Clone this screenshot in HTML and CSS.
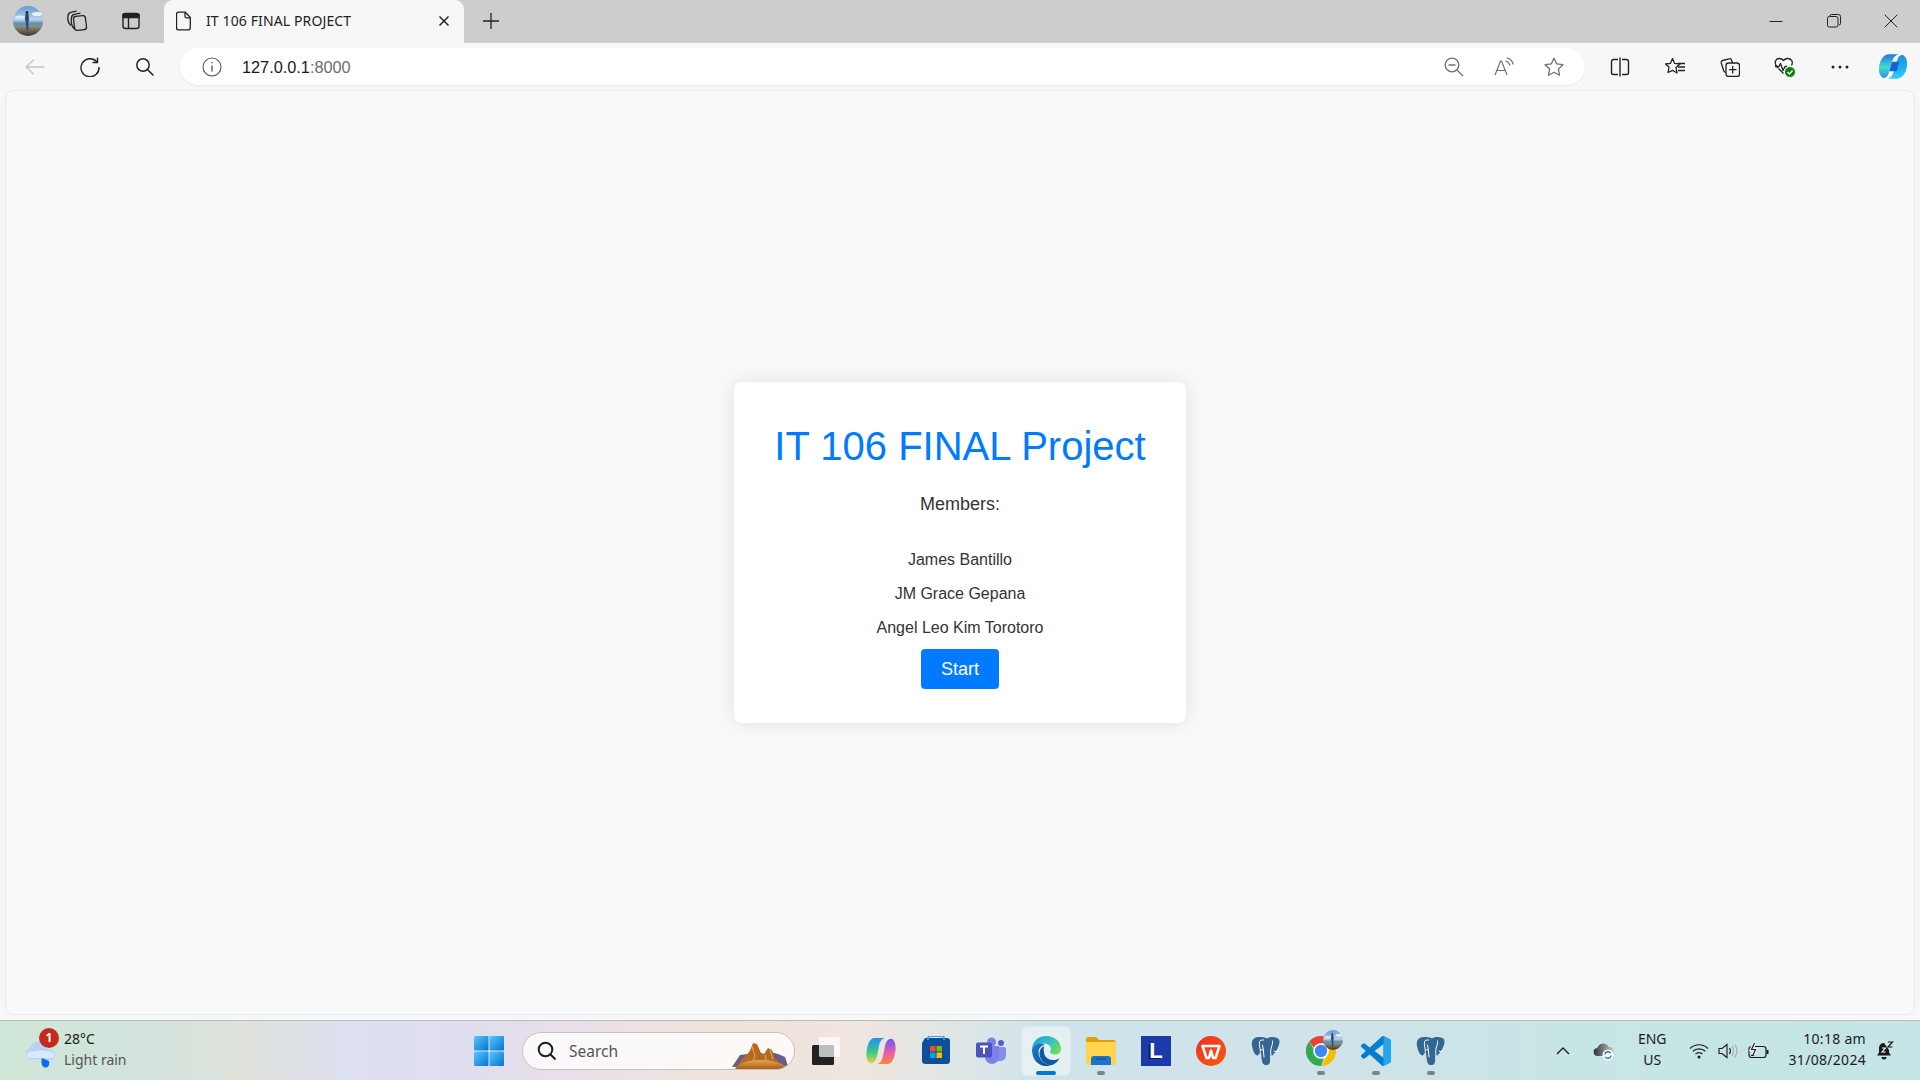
FILE: index.html
```html
<!DOCTYPE html>
<html lang="en">
<head>
<meta charset="utf-8">
<title>IT 106 FINAL PROJECT</title>
<link rel="stylesheet" href="styles.css">
</head>
<body>
<svg class="defs" width="0" height="0" aria-hidden="true">
  <defs>
    <linearGradient id="sky" x1="0" y1="0" x2="0" y2="1"><stop offset="0" stop-color="#5f9ad8"/><stop offset=".45" stop-color="#b9d4ea"/><stop offset=".58" stop-color="#5a93b8"/><stop offset=".68" stop-color="#8f8a78"/><stop offset="1" stop-color="#3f352e"/></linearGradient>
    <linearGradient id="win" x1="0" y1="0" x2="1" y2="1"><stop offset="0" stop-color="#55c9fb"/><stop offset="1" stop-color="#0672d0"/></linearGradient>
    <linearGradient id="cop1" x1="0" y1="0" x2="0" y2="1"><stop offset="0" stop-color="#1f8fe8"/><stop offset=".6" stop-color="#1fb0ee"/><stop offset="1" stop-color="#35d0f2"/></linearGradient>
    <linearGradient id="cop2" x1="0" y1="1" x2="0" y2="0"><stop offset="0" stop-color="#2f8fe8"/><stop offset=".45" stop-color="#46dcc8"/><stop offset="1" stop-color="#1c7ae0"/></linearGradient>
    <linearGradient id="copa" x1="0" y1="0" x2="0" y2="1"><stop offset="0" stop-color="#2a8df0"/><stop offset=".55" stop-color="#36c98a"/><stop offset="1" stop-color="#e8d23a"/></linearGradient>
    <linearGradient id="copb" x1="0" y1="0" x2="0" y2="1"><stop offset="0" stop-color="#6a5cf0"/><stop offset=".55" stop-color="#e85ca8"/><stop offset="1" stop-color="#f58a3c"/></linearGradient>
    <linearGradient id="edgeg" x1="0" y1="0" x2="1" y2=".6"><stop offset="0" stop-color="#1a9bd8"/><stop offset=".6" stop-color="#35c1c8"/><stop offset="1" stop-color="#6cdc5a"/></linearGradient>
    <linearGradient id="edgeb" x1="0" y1="0" x2="1" y2="1"><stop offset="0" stop-color="#1c7fd0"/><stop offset="1" stop-color="#0c4a8e"/></linearGradient>
    <linearGradient id="wps" x1="0" y1="0" x2="1" y2="1"><stop offset="0" stop-color="#ee3124"/><stop offset="1" stop-color="#fb5a08"/></linearGradient>
    <linearGradient id="sand" x1="0" y1="0" x2="0" y2="1"><stop offset="0" stop-color="#e9a650"/><stop offset="1" stop-color="#a85c18"/></linearGradient>
    <symbol id="avatar" viewBox="0 0 30 30">
      <circle cx="15" cy="15" r="15" fill="url(#sky)"/>
      <ellipse cx="24" cy="8" rx="5" ry="2" fill="#e6eff7"/>
      <ellipse cx="7" cy="11" rx="5" ry="1.500" fill="#dfeaf4"/>
      <path d="M12.500 8h3l.5 5-.8 4 .3 7h-2l-.5-7-1-4z" fill="#2b4470"/>
      <circle cx="14" cy="6.500" r="1.500" fill="#2a2a30"/>
    </symbol>
    <symbol id="pg" viewBox="0 0 30 30">
      <path d="M8 1C3 1 0 4 1 10c.8 4 2.500 9 5 9.500 2 .3 2.500-2.500 3.500-4.500 1 3 .8 7 1.500 10 .6 3.500 3 4.500 5.500 4 2.200-.5 2.600-2.500 2.600-5v-4.500c1.800.5 3 0 3.400-1.500 2.500-1.500 6-8.500 6-12.500C28.500 2 24.500 1 21 1c-2 0-3.500.5-5 1.500C14 1.300 11 1 8 1z" fill="#336791"/>
      <path d="M9.500 15c-.5-3-1.500-6-1-9 .3-1.500 2-2.500 4-2M20 20c-.5-4-.5-6 .5-9 .5-2 1.500-3.500 1-6M11.500 9c1 4 1 8 1.500 12M23 15c1.500 1 2.500 1 4-.5M9 15c1-1.500 3-2 3.500-.5" fill="none" stroke="#fff" stroke-width="1" stroke-linecap="round"/>
    </symbol>
  </defs>
</svg>

<div class="screen">
  <header class="tabstrip">
    <div class="strip-btn strip-avatar"><svg class="i30" viewBox="0 0 30 30"><use href="#avatar"/></svg></div>
    <div class="strip-btn strip-work">
      <svg class="i22" viewBox="0 0 22 22" fill="none" stroke="#222" stroke-width="1.300" stroke-linejoin="round"><rect x="8" y="6" width="12" height="14" rx="2.500" transform="rotate(-7 14 13)"/><path d="M8 18.500C5.500 16 5 11 5.500 7.500 5.800 5.500 7 4.500 9 4.200l5.500-1"/><path d="M5 15.500C2 13 1.500 8.500 2 5.500 2.300 3.500 3.500 2.500 5.500 2.200L10.500 1.200"/></svg>
    </div>
    <div class="strip-btn strip-vert">
      <svg class="i20" viewBox="0 0 20 20" fill="none" stroke="#222" stroke-width="1.400"><rect x="2" y="2.500" width="16" height="15" rx="2.500"/><path d="M2 3.500h16v3H2z" fill="#222"/><path d="M7.500 6v11.500"/></svg>
    </div>
    <div class="tab">
      <svg class="i-file" viewBox="0 0 16 20" fill="none" stroke="#222" stroke-width="1.300" stroke-linejoin="round"><path d="M2.500 1.200h6.800l5 5.300v10.300a2 2 0 0 1-2 2h-9.800a2 2 0 0 1-2-2V3.200a2 2 0 0 1 2-2z"/><path d="M9 1.500v3.800a1.500 1.500 0 0 0 1.500 1.500H14"/></svg>
      <span class="tab-title">IT 106 FINAL PROJECT</span>
      <svg class="i-x" viewBox="0 0 12 12" fill="none" stroke="#222" stroke-width="1.500"><path d="M1.500 1.500l9 9M10.500 1.500l-9 9"/></svg>
    </div>
    <div class="strip-btn strip-new">
      <svg class="i18" viewBox="0 0 18 18" fill="none" stroke="#222" stroke-width="1.300"><path d="M9 1v16M1 9h16"/></svg>
    </div>
    <div class="spacer"></div>
    <div class="win-btn"><svg class="i14" viewBox="0 0 14 14" fill="none" stroke="#222" stroke-width="1"><path d="M.5 7.500h13"/></svg></div>
    <div class="win-btn"><svg class="i14" viewBox="0 0 14 14" fill="none" stroke="#222" stroke-width="1"><rect x=".5" y="2.500" width="10.500" height="10.500" rx="1.800"/><path d="M3 2.500V2A1.500 1.500 0 0 1 4.500.5h7A2 2 0 0 1 13.500 2.500v7A1.500 1.500 0 0 1 12 11"/></svg></div>
    <div class="win-btn"><svg class="i14" viewBox="0 0 14 14" fill="none" stroke="#222" stroke-width="1"><path d="M.7.700l12.600 12.600M13.300.700.700 13.300"/></svg></div>
  </header>

  <nav class="toolbar">
    <div class="tool-btn"><svg class="i20" viewBox="0 0 20 20" fill="none" stroke="#c4c4c4" stroke-width="1.300"><path d="M19.500 10H1M9 2.500 1 10l8 7.500"/></svg></div>
    <div class="tool-btn"><svg class="i20" viewBox="0 0 20 20" fill="none" stroke="#222" stroke-width="1.400"><path d="M16.800 4.800A9 9 0 1 0 19 10"/><path d="M17.500.500v5h-5"/></svg></div>
    <div class="tool-btn"><svg class="i20" viewBox="0 0 20 20" fill="none" stroke="#222" stroke-width="1.500"><circle cx="8" cy="8" r="6.200"/><path d="M12.500 12.500l6 6"/></svg></div>
    <div class="address">
      <svg class="i-info" viewBox="0 0 20 20" fill="none" stroke="#555" stroke-width="1.100"><circle cx="10" cy="10" r="9"/><path d="M10 8.500v6" stroke-width="1.300"/><circle cx="10" cy="5.800" r=".8" fill="#555" stroke="none"/></svg>
      <span class="url"><span class="url-host">127.0.0.1</span><span class="url-port">:8000</span></span>
      <div class="spacer"></div>
      <div class="addr-btn"><svg class="i20" viewBox="0 0 20 20" fill="none" stroke="#707070" stroke-width="1.300"><circle cx="8" cy="8" r="6.800"/><path d="M4.500 8h7M13 13l6 6"/></svg></div>
      <div class="addr-btn"><svg class="i20" viewBox="0 0 20 20" fill="none" stroke="#707070" stroke-width="1.200"><path d="M1 18 6.500 4h1L13 18M3 13.500h8.500"/><path d="M11.500 4c2.200.5 3.800 2.200 4.500 4.500M13 .800c3 .7 5.400 3 6.200 6.700"/></svg></div>
      <div class="addr-btn"><svg class="i20" viewBox="0 0 20 20" fill="none" stroke="#707070" stroke-width="1.300" stroke-linejoin="round"><path d="M10 1.200l2.700 5.700 6.200.8-4.500 4.300 1.100 6.200-5.500-3-5.500 3 1.100-6.200L1.100 7.700l6.200-.8z"/></svg></div>
    </div>
    <div class="tool-btn tool-first"><svg class="i20" viewBox="0 0 20 20" fill="none" stroke="#222" stroke-width="1.400"><path d="M8 2.500H3.500a2 2 0 0 0-2 2v11a2 2 0 0 0 2 2H8M12 2.500h4.500a2 2 0 0 1 2 2v11a2 2 0 0 1-2 2H12M10 .500v19"/></svg></div>
    <div class="tool-btn"><svg class="i20" viewBox="0 0 20 20" fill="none" stroke="#222" stroke-width="1.300" stroke-linejoin="round"><path d="M7.500 1.500l2 4.800 5.500.7-4 3.500 1 5.500-4.500-2.700L3 15.500l1-5.500L.5 7l5-.7z"/><path d="M13 6.500h7M13 10h7M13 13.500h7"/></svg></div>
    <div class="tool-btn"><svg class="i20" viewBox="0 0 20 20" fill="none" stroke="#222" stroke-width="1.300" stroke-linejoin="round"><rect x="6" y="6" width="13.500" height="13.500" rx="2.500"/><path d="M12.700 9v7.500M9 12.700h7.500"/><path d="M12.500 6 11.500 3a1.800 1.800 0 0 0-2.200-1.200L2.500 3.500A1.800 1.800 0 0 0 1.200 5.700l2.500 8c.3.700.9 1.300 2.300 1.800"/></svg></div>
    <div class="tool-btn"><svg class="i22" viewBox="0 0 22 22" fill="none" stroke="#222" stroke-width="1.300" stroke-linejoin="round"><path d="M4 12C1.500 9.500.5 7.500 1.500 5c1.200-3 5.500-3.500 8-.5 2.500-3 7-2.500 8.500.5 .5 1.500.3 3-.5 4.500"/><path d="M1 10.500h4l1.500-3 2.500 7 2-4h2M4.500 12.500l5 5"/><circle cx="16" cy="16" r="5.500" fill="#107c10" stroke="#f7f7f7" stroke-width="1"/><path d="M13.500 16l2 2 3-3.500" stroke="#fff" stroke-width="1.300"/></svg></div>
    <div class="tool-btn"><svg class="i20" viewBox="0 0 20 20" fill="#222"><circle cx="3" cy="10" r="1.500"/><circle cx="10" cy="10" r="1.500"/><circle cx="17" cy="10" r="1.500"/></svg></div>
    <div class="tool-btn tool-last"><svg class="i-cop" viewBox="0 0 32 28"><path d="M11 1h11c-4 1-6 4-7 8l-3 10c-1 5-4 8-7 7C2 24 .5 20 1 15 2 8 5 2 11 1z" fill="url(#cop2)"/><path d="M21 27H10c4-1 6-4 7-8l3-10c1-5 4-8 7-7 3 2 4.500 6 4 11-1 7-4 13-10 14z" fill="url(#cop1)"/><path d="M15 9h7.500L20 19h-8z" fill="#1a5fd6"/></svg></div>
  </nav>

  <div class="frame">
    <main class="page">
      <section class="card">
        <h1 class="card-title">IT 106 FINAL Project</h1>
        <p class="card-label">Members:</p>
        <p class="member member-first">James Bantillo</p>
        <p class="member">JM Grace Gepana</p>
        <p class="member">Angel Leo Kim Torotoro</p>
        <button class="start" type="button">Start</button>
      </section>
    </main>
  </div>

  <footer class="taskbar">
    <div class="task-left">
      <div class="weather-icon">
        <svg class="i-cloud" viewBox="0 0 32 30"><path d="M7 20a5.500 5.500 0 0 1-1-10.800C7.500 4 13 1.500 18 4c3 1.500 4.500 4 5 6 4-.5 8 2 8 6s-3 5-6 5z" fill="#b6d2f5"/><path d="M5 19c-3-1-3-5 0-6 8-2 18-2 23 0 3 1 3 5 0 6z" fill="#d9e8fb"/><path d="M18 19l7 3c1 4-1 7-4 6.500S16.500 24 18 19z" fill="#0a6fe8"/></svg>
        <span class="badge">1</span>
      </div>
      <div class="text-stack">
        <span class="t-main">28°C</span>
        <span class="t-sub">Light rain</span>
      </div>
    </div>

    <div class="task-center">
      <div class="task-item task-start"><svg class="i30" viewBox="0 0 30 30"><g fill="url(#win)"><rect width="14.500" height="14.500" rx="1"/><rect x="15.500" width="14.500" height="14.500" rx="1"/><rect y="15.500" width="14.500" height="14.500" rx="1"/><rect x="15.500" y="15.500" width="14.500" height="14.500" rx="1"/></g></svg></div>
      <div class="search">
        <svg class="i-search" viewBox="0 0 20 20" fill="none" stroke="#1f1f1f" stroke-width="2"><circle cx="8.500" cy="8.500" r="6.800"/><path d="M13.500 13.500l5 5"/></svg>
        <span class="search-text">Search</span>
        <svg class="mount" viewBox="0 0 56 27"><path d="M0 25 8 13l8-1 3-5 5 3 8 2 6-2 8 2 7 3 3 9z" fill="#6c5a88"/><path d="M6 27C6 19 14 14 18 9l3-8 4 1 4 9 3 1 4-6 4 2 3 9 7 6-3 4z" fill="#b56a20"/><path d="M20 4l3 10-2 5M33 13l2 8M38 8l3 9" stroke="#e6a860" fill="none"/><path d="M3 27c2-5 12-9 24-9s24 3 26 7l-2 2z" fill="url(#sand)"/></svg>
      </div>
      <div class="task-item task-view"><svg class="i30" viewBox="0 0 30 28"><rect x="2" y="8" width="22" height="20" rx="1.500" fill="#222"/><rect x="9" y="0" width="22" height="20" rx="1.500" fill="#fff" fill-opacity=".7"/></svg></div>
      <div class="task-item"><svg class="i30" viewBox="0 0 30 30"><path d="M8 2h11c-4 1-5 4-6 8l-2 10c-1 5-4 8-7 7-3-2-4-6-3.500-11C1.500 9 3 3 8 2z" fill="url(#copa)"/><path d="M22 28H11c4-1 5-4 6-8l2-10c1-5 4-8 7-7 3 2 4 6 3.500 11-1 7-2.500 13-7.500 14z" fill="url(#copb)"/></svg></div>
      <div class="task-item"><svg class="i30" viewBox="0 0 30 30"><path d="M1 7 4 2h22c2 0 3 1 3 3v20c0 2-1 3-3 3H5c-3 0-4-1-4-3z" fill="#0f4f9a"/><path d="M7 4V2c0-1 1-2 2-2h12c1 0 2 1 2 2v2" fill="none" stroke="#2fa8f0" stroke-width="1.800"/><rect x="9" y="10" width="5.500" height="5.500" fill="#f25022"/><rect x="15.500" y="10" width="5.500" height="5.500" fill="#7fba00"/><rect x="9" y="16.500" width="5.500" height="5.500" fill="#00a4ef"/><rect x="15.500" y="16.500" width="5.500" height="5.500" fill="#ffb900"/></svg></div>
      <div class="task-item"><svg class="i30" viewBox="0 0 30 30"><circle cx="25" cy="7" r="3" fill="#5b5fc7"/><path d="M19 11h9c1 0 2 1 2 2v6c0 4-3 6-6 6h-5z" fill="#7b83eb" opacity=".9"/><circle cx="15.500" cy="6" r="4.500" fill="#7b83eb"/><path d="M9 10h14v11a7 7 0 0 1-14 0z" fill="#7b83eb"/><rect y="6.500" width="16" height="15" rx="2" fill="#4b53bc"/><path d="M4 10.500h8M8 10.500V18" stroke="#fff" stroke-width="2" fill="none"/></svg></div>
      <div class="task-item task-active is-active"><svg class="i30" viewBox="0 0 30 30"><path d="M1 14C1 6 7 0 15 0c8 0 15 5 15 13 0 3.500-2.500 5.500-6 5.500-3 0-5-1-5-2.500 0-1 1-1.200 1-3 0-3-3-5.500-7-5.500C6 7.500 1.500 10 1 14z" fill="url(#edgeg)"/><path d="M1 14c.5-4 5-6.500 9-6.500 1.500 0 2.800.3 3.800.9C10 9.500 7.500 12.500 7.500 16c0 6 4.500 12 11 13.500-1 .4-2.300.5-3.500.5C7 30 1 23 1 14z" fill="url(#edgeb)"/><path d="M13 16c0 4 3.500 8 9 8 2.500 0 5-.6 6.500-2-1.500 4-5.500 7-10 7.500C12.500 28 8 22 8.500 16.500 9 13 11 11 13 10c-.3 2-.5 4 0 6z" fill="#0e5aa7"/></svg></div>
      <div class="task-item is-running"><svg class="i30" viewBox="0 0 30 28"><path d="M0 2a2 2 0 0 1 2-2h8l3 3h14a3 3 0 0 1 3 3v4H0z" fill="#e0a100"/><path d="M0 5h30v21a2 2 0 0 1-2 2H2a2 2 0 0 1-2-2z" fill="#ffd54f"/><path d="M5 28v-6a3 3 0 0 1 3-3h14a3 3 0 0 1 3 3v6z" fill="#1a73c8"/><path d="M10 22h10" stroke="#0b4a86" stroke-width="1"/></svg></div>
      <div class="task-item"><div class="l-app"><span class="l-letter">L</span></div></div>
      <div class="task-item"><svg class="i30" viewBox="0 0 30 30"><circle cx="15" cy="15" r="15" fill="url(#wps)"/><path d="M6.500 10h17l-4 12h-2.500L15 14.500 13 22h-2.500z" fill="none" stroke="#fff" stroke-width="2.600" stroke-linejoin="round"/></svg></div>
      <div class="task-item"><svg class="i30" viewBox="0 0 30 30"><use href="#pg"/></svg></div>
      <div class="task-item is-running">
        <svg class="i30" viewBox="0 0 30 30"><path d="M15 0a15 15 0 0 1 13 7.500H15a7.500 7.500 0 0 0-6.900 4.500L3.300 5.500A15 15 0 0 1 15 0z" fill="#ea4335"/><path d="M28 7.500A15 15 0 0 1 15 30l6.500-11.300A7.500 7.500 0 0 0 21.500 11z" fill="#fbbc04"/><path d="M15 30A15 15 0 0 1 3.300 5.500L9.800 17a7.500 7.500 0 0 0 8.500 3.700z" fill="#34a853"/><circle cx="15" cy="15" r="7.800" fill="#fff"/><circle cx="15" cy="15" r="6.200" fill="#4285f4"/></svg>
        <svg class="chrome-avatar" viewBox="0 0 30 30"><use href="#avatar"/></svg>
      </div>
      <div class="task-item is-running"><svg class="i30" viewBox="0 0 24 24"><path fill="#0a7ccc" d="M23.150 2.587L18.210.21a1.494 1.494 0 0 0-1.705.29l-9.460 8.630-4.120-3.128a.999.999 0 0 0-1.276.057L.327 7.261A1 1 0 0 0 .326 8.740L3.899 12 .326 15.260a1 1 0 0 0 .001 1.479L1.650 17.940a.999.999 0 0 0 1.276.057l4.120-3.128 9.460 8.630a1.492 1.492 0 0 0 1.704.29l4.942-2.377A1.500 1.500 0 0 0 24 20.060V3.939a1.500 1.500 0 0 0-.85-1.352zm-5.146 14.861L10.826 12l7.178-5.448v10.896z"/><path fill="#22a5ee" d="M18 .2c.1 0 .2 0 .21.010l4.940 2.377A1.500 1.500 0 0 1 24 3.939V20.060a1.500 1.500 0 0 1-.85 1.352l-4.940 2.377a1.400 1.400 0 0 1-.21.010z"/></svg></div>
      <div class="task-item is-running"><svg class="i30" viewBox="0 0 30 30"><use href="#pg"/></svg></div>
    </div>

    <div class="task-right">
      <svg class="i-chev" viewBox="0 0 14 8" fill="none" stroke="#1b1b1b" stroke-width="1.300"><path d="M1 7l6-6 6 6"/></svg>
      <div class="drive">
        <svg class="i-drive" viewBox="0 0 22 20"><defs><linearGradient id="dr" x1="0" y1="0" x2="1" y2="0"><stop offset="0" stop-color="#333"/><stop offset="1" stop-color="#ccc"/></linearGradient></defs><path d="M5 15a4 4 0 0 1-.7-8c1-4 6-6 9.500-3.500 1 .8 1.500 1.500 1.800 2.500 3-.4 5.400 1.500 5.400 4.500 0 2.500-2 4.500-4.500 4.500z" fill="url(#dr)"/><circle cx="15" cy="14" r="5.500" fill="#fff"/><path d="M11.800 13.500a3.300 3.300 0 0 1 6-1.300M18.200 14.500a3.300 3.300 0 0 1-6 1.300" fill="none" stroke="#0a7ce0" stroke-width="1.400"/></svg>
      </div>
      <div class="text-stack stack-lang"><span class="t-main">ENG</span><span class="t-main">US</span></div>
      <div class="sys-icons">
        <svg class="i-wifi" viewBox="0 0 20 16" fill="none" stroke="#1b1b1b" stroke-width="1.200"><path d="M1 5.500c5-5 13-5 18 0M3.800 8.300c3.500-3.200 9-3.200 12.500 0M6.500 11c2-1.700 5-1.700 7 0"/><circle cx="10" cy="14" r="1.500" fill="#1b1b1b" stroke="none"/></svg>
        <svg class="i-vol" viewBox="0 0 20 16" fill="none" stroke="#1b1b1b" stroke-width="1.100"><path d="M1 5.500h3L9 1.500v13L4 10.500H1z"/><path d="M11.500 5c1.300 2 1.300 4 0 6"/><path d="M14 3c2 3.200 2 6.800 0 10M16.800 1.500c2.600 4 2.600 9 0 13" stroke="#aaa"/></svg>
        <svg class="i-batt" viewBox="0 0 22 16" fill="none" stroke="#1b1b1b" stroke-width="1.200"><rect x="1" y="3.500" width="17" height="11" rx="2.500"/><path d="M19.500 7v4" stroke-width="2"/><path d="M2.500 13h4V8z" fill="#1b1b1b" stroke="none"/><path d="M6.500 0 3.500 6.500h4L5 12" stroke="#f0f6f5" stroke-width="3.500"/><path d="M6.500 0 3.500 6.500h4L5 12" stroke="#1b1b1b"/></svg>
      </div>
      <div class="text-stack stack-time"><span class="t-main">10:18 am</span><span class="t-main">31/08/2024</span></div>
      <svg class="i-bell" viewBox="0 0 18 20"><path d="M8 2C4.500 2 3 4.500 3 8v3.500L1 14.500h14l-2-3V9z" fill="#1b1b1b"/><path d="M5.500 16h5a2.500 2.500 0 0 1-5 0z" fill="#1b1b1b"/><path d="M6 7h3.500L6 11h3.500" fill="none" stroke="#fff" stroke-width="1.100"/><path d="M12 1h4.500L12 6h4.500" fill="none" stroke="#1b1b1b" stroke-width="1.200"/></svg>
    </div>
  </footer>
</div>
</body>
</html>
```

FILE: styles.css
```css
* { box-sizing: border-box; }
html, body { margin: 0; height: 100%; }
body { font-family: "Liberation Sans", Arial, sans-serif; overflow: hidden; }
.defs { position: absolute; }
svg { display: block; flex: none; }

.screen { display: flex; flex-direction: column; width: 1920px; height: 1080px; background: #f7f7f7; }
.spacer { flex: 1; }

.i14 { width: 14px; height: 14px; }
.i18 { width: 18px; height: 18px; }
.i20 { width: 20px; height: 20px; }
.i22 { width: 22px; height: 22px; }
.i30 { width: 30px; height: 30px; }

/* tab strip */
.tabstrip { display: flex; align-items: stretch; height: 43px; background: #cdcdcd; }
.strip-btn { display: flex; align-items: center; justify-content: center; padding-bottom: 2px; }
.strip-avatar { width: 56px; }
.strip-work { width: 42px; }
.strip-vert { width: 66px; }
.strip-new { width: 54px; }
.tab { display: flex; align-items: center; width: 300px; padding: 0 14px 2px 12px; background: #f7f7f7; border-radius: 9px 9px 0 0; }
.i-file { width: 16px; height: 20px; }
.tab-title { flex: 1; margin-left: 14px; font: 14px/20px "Noto Sans", sans-serif; letter-spacing: .12px; color: #222; white-space: nowrap; }
.i-x { width: 12px; height: 12px; }
.win-btn { display: flex; align-items: center; justify-content: center; width: 57.5px; padding-bottom: 2px; }

/* toolbar */
.toolbar { display: flex; align-items: center; height: 47px; padding-left: 7.5px; background: #f7f7f7; }
.tool-btn { display: flex; align-items: center; justify-content: center; width: 55px; height: 37px; flex: none; }
.tool-first { margin-left: 7.5px; }
.tool-last { width: 51px; }
.i-cop { width: 30px; height: 27px; }
.address { display: flex; align-items: center; flex: none; width: 1405px; height: 37px; margin-left: 7.5px; padding: 0 6px 0 22px; background: #fff; border-radius: 19px; box-shadow: 0 1px 2px rgba(0,0,0,.06); }
.i-info { width: 20px; height: 20px; }
.url { margin-left: 20px; font: 16.3px/20px "Liberation Sans", sans-serif; }
.url-host { color: #1a1a1a; }
.url-port { color: #6d6d6d; }
.addr-btn { display: flex; align-items: center; justify-content: center; width: 50px; height: 37px; }

/* web content */
.frame { flex: 1; padding: 0 5px 5px; background: #f7f7f7; min-height: 0; }
.page { display: flex; align-items: center; justify-content: center; height: 100%; background: #f8f9fa; border: 1px solid #e9e9e9; border-radius: 8px; }
.card { display: flex; flex-direction: column; align-items: center; width: 452px; height: 341px; padding: 41px 40px 0; background: #fff; border-radius: 8px; box-shadow: 0 0 20px rgba(0,0,0,.1); color: #333; }
.card-title { margin: 0 0 25px; font-size: 40px; line-height: 46px; font-weight: 400; color: #007bff; white-space: nowrap; }
.card-label { margin: 0; font-size: 18px; line-height: 21px; }
.member { margin: 16px 0 0; font-size: 16px; line-height: 18px; }
.member-first { margin-top: 36px; }
.start { width: 78px; height: 40px; margin-top: 12px; padding: 0; border: 0; border-radius: 4px; background: #007bff; color: #fff; font: 18px/20px "Liberation Sans", sans-serif; }

/* taskbar */
.taskbar { display: grid; grid-template-columns: 1fr auto 1fr; align-items: center; height: 60px; border-top: 1px solid #b7bdbd; background: linear-gradient(90deg, #cfe7d8 0, #d3e3dc 150px, #dee2da 240px, #dde0ee 340px, #e0deee 480px, #eadfe8 580px, #f0e3dc 720px, #efe6df 860px, #dde6e6 960px, #cfe3ea 1050px, #d0e3ea 1300px, #c9e4e6 1500px, #c5e6e3 1700px, #c5e4e6 1920px); }
.task-left { display: flex; align-items: center; padding-left: 24px; }
.weather-icon { position: relative; width: 32px; height: 30px; margin-top: 6px; }
.i-cloud { width: 32px; height: 30px; }
.badge { position: absolute; top: -11px; left: 15px; width: 20px; height: 20px; border-radius: 50%; background: #c42b1c; color: #fff; font: 700 12px/20px "Noto Sans", sans-serif; text-align: center; }
.text-stack { display: flex; flex-direction: column; margin-left: 8px; padding-bottom: 2px; font: 14px/20.5px "Noto Sans", sans-serif; white-space: nowrap; }
.t-main { color: #1b1b1b; }
.t-sub { color: #555; }

.task-center { display: flex; align-items: center; gap: 7px; }
.task-item { position: relative; display: flex; align-items: center; justify-content: center; width: 48px; height: 48px; border-radius: 5px; }
.task-start { margin-right: 2px; }
.task-view { margin: 0 1px 0 -1px; }
.task-active { background: rgba(255,255,255,.45); box-shadow: 0 0 0 1px rgba(255,255,255,.25); }
.is-running::after, .is-active::after { content: ""; position: absolute; left: 50%; bottom: 0; height: 4px; border-radius: 2px; transform: translateX(-50%); }
.is-running::after { width: 8px; background: #7a8286; }
.is-active::after { width: 20px; background: #0078d4; }
.search { display: flex; align-items: center; width: 273px; height: 38px; padding: 0 6px 0 14px; border: 1px solid #c9c1bd; border-radius: 19px; background: rgba(255,255,255,.78); overflow: hidden; }
.i-search { width: 20px; height: 20px; }
.search-text { margin-left: 12px; font: 15.5px/20px "Noto Sans", sans-serif; color: #555; }
.mount { width: 56px; height: 27px; margin: 10px 0 0 auto; }
.l-app { display: flex; align-items: center; justify-content: center; width: 30px; height: 30px; background: #1c3aa9; }
.l-letter { font: 700 22px/30px "Liberation Sans", sans-serif; color: #fff; text-shadow: -2px 1px 0 #0a1f5c; }
.chrome-avatar { position: absolute; top: 3px; left: 26px; width: 20px; height: 20px; }

.task-right { display: flex; align-items: center; justify-content: flex-end; padding-right: 26px; }
.i-chev { width: 14px; height: 8px; margin-right: 23px; }
.i-drive { width: 22px; height: 20px; }
.drive { margin-right: 23px; }
.stack-lang { margin: 0 22px 0 0; align-items: center; }
.sys-icons { display: flex; align-items: center; gap: 7px; margin-right: 19px; }
.i-wifi { width: 20px; height: 16px; }
.i-vol { width: 20px; height: 16px; margin-left: 2px; }
.i-batt { width: 22px; height: 16px; margin-left: 3px; }
.stack-time { margin: 0 10px 0 0; align-items: flex-end; letter-spacing: .3px; }
.i-bell { width: 18px; height: 20px; }
```
